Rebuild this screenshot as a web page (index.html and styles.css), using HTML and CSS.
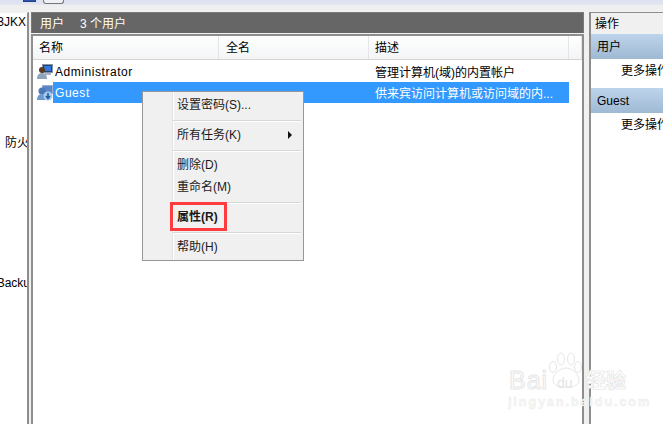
FILE: index.html
```html
<!DOCTYPE html>
<html lang="zh">
<head>
<meta charset="utf-8">
<title>用户</title>
<link rel="stylesheet" href="styles.css">
</head>
<body>
<div class="toolbar">
  <span class="tool-blue"></span>
  <span class="tool-outline"></span>
</div>
<div class="panes">
  <aside class="tree">
    <div class="tree-a">3JKX</div>
    <div class="tree-b">防火</div>
    <div class="tree-c">Backu</div>
  </aside>
  <main class="center">
    <div class="titlebar"><span>用户</span><span>3 个用户</span></div>
    <div class="list">
      <div class="cols">
        <div class="col c1">名称</div>
        <div class="col c2">全名</div>
        <div class="col c3">描述</div>
        <div class="col c4"></div>
      </div>
      <div class="row first">
        <svg class="uicon" viewBox="0 0 16 17"><rect x="5.5" y="1.5" width="10" height="8" fill="#2b3f7a" stroke="#8a94a8"/><rect x="7" y="3" width="7" height="5" fill="#2f78e0"/><rect x="8" y="10" width="6" height="2" fill="#a9b2c0"/><circle cx="5" cy="7" r="3" fill="#5a3a1e"/><path d="M0 16c0-4 2-6 5-6s5 2 5 6z" fill="#8fa4bc"/></svg>
        <span class="name">Administrator</span>
        <span class="desc">管理计算机(域)的内置帐户</span>
      </div>
      <div class="row sel">
        <svg class="uicon" viewBox="0 0 16 17"><rect x="5.5" y="1.5" width="10" height="8" fill="#5a86c6" stroke="#9ab0d0"/><circle cx="5" cy="7" r="3.5" fill="#4a78b8"/><path d="M0 16c0-4 2-6 5-6s5 2 5 6z" fill="#6a9ad0"/><circle cx="11" cy="12" r="4.5" fill="#a8c8ec"/><path d="M11 9v4M9 12l2 2.5 2-2.5" stroke="#1f5a9a" stroke-width="1.5" fill="none"/></svg>
        <span class="name-box">Guest</span>
        <span class="desc">供来宾访问计算机或访问域的内...</span>
      </div>
    </div>
  </main>
  <aside class="actions">
    <div class="act-title">操作</div>
    <div class="act-head">用户</div>
    <div class="act-item">更多操作</div>
    <div class="act-head second">Guest</div>
    <div class="act-item">更多操作</div>
  </aside>
</div>
<nav class="menu">
  <div class="mi">设置密码(S)...</div>
  <div class="sep"></div>
  <div class="mi sub">所有任务(K)<i class="arrow"></i></div>
  <div class="sep"></div>
  <div class="mi">删除(D)</div>
  <div class="mi">重命名(M)</div>
  <div class="sep"></div>
  <div class="mi bold">属性(R)</div>
  <div class="sep"></div>
  <div class="mi">帮助(H)</div>
  <span class="redbox"></span>
</nav>
<div class="mark">
  <svg class="paw" viewBox="0 0 35 36"><g fill="#fff" stroke="#e6e6e6" stroke-width="1"><ellipse cx="5" cy="15" rx="3.5" ry="5.5"/><ellipse cx="13" cy="7" rx="3.5" ry="6"/><ellipse cx="23" cy="7" rx="3.5" ry="6"/><ellipse cx="30" cy="15" rx="3.5" ry="5.5"/><path d="M18 16c6 0 13 6 13 12 0 5-5 7-13 7s-13-2-13-7c0-6 7-12 13-12z"/></g></svg>
  <span class="bai">Bai</span>
  <span class="du">du</span>
  <span class="jy">经验</span>
  <span class="mark-url">jingyan.baidu.com</span>
</div>
</body>
</html>
```
FILE: styles.css
```css
* { box-sizing: border-box; }
html, body { margin: 0; padding: 0; }
body {
  width: 663px; height: 424px; overflow: hidden; position: relative;
  background: #f0f0f0;
  font: 12px "Liberation Sans", "Noto Sans CJK SC", sans-serif;
  color: #000;
}
.toolbar {
  height: 12px; display: flex; align-items: flex-start; gap: 7px; padding-left: 23px;
  background: linear-gradient(#dfe3f1 0, #dfe3f1 4px, #eeeeee 5px, #f0f0f0 100%);
}
.tool-blue { width: 13px; height: 2px; background: #2b55b0; border: 1px solid #223f80; border-top: 0; }
.tool-outline { width: 21px; height: 4px; border: 1px solid #777; border-top: 0; border-radius: 0 0 3px 3px; background: #eef0f6; }
.panes { display: flex; height: 412px; }
.tree {
  width: 29px; flex: none; background: #fff; border-right: 2px solid #8e8e8e; overflow: hidden;
  display: flex; flex-direction: column; align-items: flex-end; font-size: 12px;
  border-top: 1px solid #f0f0f0;
}
.tree-a { margin-top: 1px; line-height: 16px; padding-right: 1px; white-space: nowrap; }
.tree-b { margin-top: 105px; line-height: 16px; margin-right: -2px; white-space: nowrap; }
.tree-c { margin-top: 124px; line-height: 16px; white-space: nowrap; margin-right: -3px; }
.center { width: 553px; margin-left: 2px; flex: none; display: flex; flex-direction: column; }
.titlebar {
  height: 21px; background: #666; color: #fff; display: flex; gap: 16px; align-items: center;
  padding: 0 0 1px 8px; font-size: 12px; border: 1px solid #7a7a7a; border-bottom: 0;
}
.list {
  flex: 1; background: #fff; border: 2px solid #8e8e8e; border-bottom: 0;
  margin-top: 1px;
}
.cols {
  display: flex; height: 24px; background: linear-gradient(#fff, #f2f4f6);
  border-bottom: 1px solid #d5d5d5;
}
.col { border-right: 1px solid #e3e5e7; padding: 3px 0 0 7px; line-height: 18px; }
.c1 { width: 186px; padding-left: 6px; }
.c2 { width: 150px; }
.c3 { width: 200px; padding-left: 6px; }
.c4 { width: 13px; }
.row { height: 21px; display: flex; align-items: center; position: relative; padding-left: 4px; }
.row.first { height: 22px; }
.uicon { width: 16px; height: 17px; flex: none; }
.name { margin-left: 2px; padding-top: 2px; font-size: 12px; width: 320px; letter-spacing: 0.55px; }
.name-box {
  width: 516px; height: 21px; background: #3399ff; color: #fff; line-height: 23px; padding-left: 2px;
  letter-spacing: 0.55px;
}
.desc { position: absolute; left: 342px; font-size: 12px; white-space: nowrap; }
.sel .desc { color: #fff; }
.actions { flex: 1; margin-left: 5px; background: #fff; border-left: 2px solid #8e8e8e; border-top: 1px solid #8e8e8e; overflow: hidden; }
.act-title { height: 21px; background: #f0f0f0; line-height: 23px; padding-left: 4px; }
.act-head { height: 25px; line-height: 27px; padding-left: 6px; background: linear-gradient(#bdd4eb, #9fb9d3); white-space: nowrap; }
.act-head.second { margin-top: 4px; }
.act-item { height: 25px; line-height: 24px; padding-left: 30px; white-space: nowrap; }
.menu {
  position: absolute; left: 142px; top: 91px; width: 162px; height: 170px; padding: 3px 2px 2px;
  background: linear-gradient(90deg, #f0f0f0 29px, #e3e3e3 29px, #e3e3e3 30px, #fff 30px, #fff 31px, #f0f0f0 31px);
  border: 1px solid #979797;
}
.mi { height: 22px; line-height: 20px; padding-left: 32px; position: relative; white-space: nowrap; color: #1a1a1a; }
.sep { height: 5px; margin: 3px 0 0 28px; position: relative; }
.sep::before { content: ""; position: absolute; left: 0; right: 0; top: 0; height: 1px; background: #d7d7d7; }
.sep::after { content: ""; position: absolute; left: 0; right: 0; top: 1px; height: 1px; background: #fff; }
.bold { font-weight: bold; }
.arrow { position: absolute; left: 143px; top: 6px; border-left: 4px solid #111; border-top: 4px solid transparent; border-bottom: 4px solid transparent; }
.redbox { position: absolute; left: 27px; top: 110px; width: 57px; height: 29px; border: 3px solid #ff3b3f; }
.mark { position: absolute; left: 505px; top: 350px; width: 130px; height: 60px; }
.paw { position: absolute; left: 43px; top: 2px; width: 35px; height: 36px; }
.bai { position: absolute; left: 4px; top: 17px; font: 25px/26px "Liberation Sans", sans-serif; color: #fff; -webkit-text-stroke: 1px #e6e6e6; letter-spacing: 1px; }
.du { position: absolute; left: 52px; top: 26px; font: 14px/14px "Liberation Sans", sans-serif; color: #e4e4e4; }
.jy { position: absolute; left: 81px; top: 18px; font: bold 20px/24px "Noto Sans CJK SC", sans-serif; color: #fff; -webkit-text-stroke: 0.7px #e4e4e4; white-space: nowrap; }
.mark-url { position: absolute; left: 3px; top: 44px; white-space: nowrap; font: bold 13px/16px "Liberation Sans", sans-serif; color: #f6f6f6; -webkit-text-stroke: 0.4px #ececec; letter-spacing: 1.7px; }
```
